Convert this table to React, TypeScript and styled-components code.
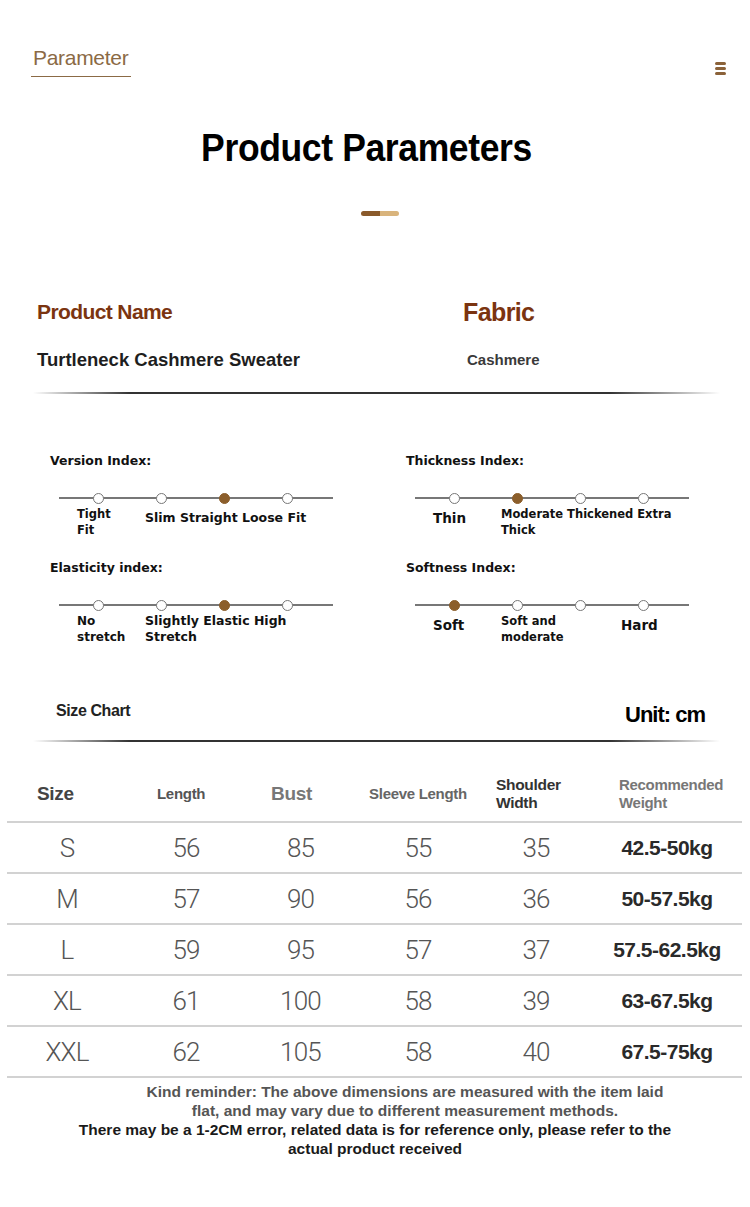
import * as React from 'react';
import styled, { createGlobalStyle } from 'styled-components';

const NARROW = '"Liberation Sans", Arial, sans-serif';
const WIDE = '"DejaVu Sans", Verdana, sans-serif';
const LIGHT = 'Roboto, "Liberation Sans", sans-serif';
const BROWN = '#8b6a45';
const DOT = '#8b5e2b';

const GlobalStyle = createGlobalStyle`
  html, body {
    margin: 0;
    padding: 0;
    background: #fff;
  }
  body {
    font-family: ${NARROW};
    color: #222;
  }
`;

const Page = styled.div`
  width: 750px;
  min-height: 1207px;
  background: #fff;
  overflow: hidden;
`;

const TopBar = styled.div`
  display: flex;
  justify-content: space-between;
  align-items: flex-start;
  padding: 46px 24px 0 31px;
`;

const Tab = styled.div`
  font-family: ${NARROW};
  font-size: 21px;
  line-height: 24px;
  letter-spacing: -0.3px;
  color: ${BROWN};
  padding: 0 3px 6px 2px;
  border-bottom: 1px solid ${BROWN};
`;

const MenuIcon = styled.div`
  display: flex;
  flex-direction: column;
  gap: 2px;
  margin-top: 16px;

  span {
    display: block;
    width: 11px;
    height: 3px;
    border-radius: 2px;
    background: #8b6239;
  }
`;

const Title = styled.h1`
  margin: 48px 17px 0 0;
  text-align: center;
  font-family: ${NARROW};
  font-weight: bold;
  font-size: 39px;
  line-height: 46px;
  letter-spacing: -0.4px;
  color: #000;
  transform: scaleX(0.91);
`;

const Accent = styled.div`
  display: flex;
  justify-content: center;
  margin-top: 40px;
  padding-left: 9px;

  span {
    width: 19px;
    height: 5px;
    background: #8a5a2b;
    border-radius: 3px 0 0 3px;
  }
  span + span {
    background: #d9b47c;
    border-radius: 0 3px 3px 0;
  }
`;

const InfoGrid = styled.div`
  display: grid;
  grid-template-columns: 426px 1fr;
  padding: 82px 0 0 37px;
`;

const InfoLabel = styled.div<{ $size: number }>`
  font-family: ${NARROW};
  font-weight: bold;
  font-size: ${({ $size }) => $size}px;
  line-height: 28px;
  letter-spacing: -0.6px;
  color: #7b3410;
`;

const InfoValue = styled.div<{ $size: number; $indent?: number }>`
  margin-top: 22px;
  padding-left: ${({ $indent }) => $indent ?? 0}px;
  font-family: ${NARROW};
  font-weight: bold;
  font-size: ${({ $size }) => $size}px;
  line-height: 24px;
  color: ${({ $size }) => ($size > 16 ? '#1e1e1e' : '#3a3a3a')};
`;

const Divider = styled.div<{ $top: number }>`
  margin: ${({ $top }) => $top}px 30px 0 33px;
  height: 2px;
  background: linear-gradient(
    to right,
    rgba(40, 40, 40, 0) 0%,
    #333 14%,
    #333 84%,
    rgba(40, 40, 40, 0) 100%
  );
`;

const IndexGrid = styled.div`
  display: grid;
  grid-template-columns: 356px 1fr;
  row-gap: 21px;
  padding: 58px 0 0 50px;
`;

const IndexBlock = styled.div`
  display: flex;
  flex-direction: column;
`;

const IndexTitle = styled.div`
  font-family: ${WIDE};
  font-weight: bold;
  font-size: 12.5px;
  line-height: 18px;
  color: #111;
`;

const Track = styled.div`
  position: relative;
  display: grid;
  grid-template-columns: repeat(4, 63px);
  width: 274px;
  margin: 22px 0 0 9px;
  padding-left: 8px;
  box-sizing: border-box;
  height: 12px;
  align-items: center;

  &::before {
    content: '';
    position: absolute;
    left: 0;
    right: 0;
    top: 5px;
    height: 1.5px;
    background: #777;
  }
`;

const Dot = styled.span<{ $on: boolean }>`
  position: relative;
  justify-self: center;
  width: 11px;
  height: 11px;
  box-sizing: border-box;
  border-radius: 50%;
  border: 1px solid ${({ $on }) => ($on ? DOT : '#777')};
  background: ${({ $on }) => ($on ? DOT : '#fff')};
`;

const Labels = styled.div`
  display: grid;
  grid-template-columns: 68px 120px auto;
  padding-left: 27px;
  margin-top: 2px;
  align-items: start;
`;

const Label = styled.div<{ $size: number; $drop: boolean }>`
  padding-top: ${({ $drop }) => ($drop ? 4 : 0)}px;
  font-family: ${WIDE};
  font-weight: bold;
  font-size: ${({ $size }) => $size}px;
  line-height: 16px;
  color: #111;
  white-space: pre;
`;

const ChartHead = styled.div`
  display: flex;
  justify-content: space-between;
  align-items: center;
  padding: 57px 45px 0 56px;
`;

const ChartTitle = styled.div`
  font-family: ${NARROW};
  font-weight: bold;
  font-size: 16px;
  letter-spacing: -0.4px;
  color: #222;
  margin-top: -8px;
`;

const Unit = styled.div`
  font-family: ${NARROW};
  font-weight: bold;
  font-size: 22px;
  letter-spacing: -1px;
  color: #000;
`;

const Table = styled.div`
  margin: 28px 8px 0 7px;
`;

const Row = styled.div<{ $head?: boolean }>`
  display: grid;
  grid-template-columns: 120px 118px 111px 124px 112px 1fr;
  align-items: center;
  height: ${({ $head }) => ($head ? 47 : 49)}px;
  padding-bottom: ${({ $head }) => ($head ? 4 : 0)}px;
  border-bottom: 2px solid #d2d2d2;
`;

const HeadCell = styled.div<{ $pad?: number; $size: number; $color: string }>`
  text-align: ${({ $pad }) => ($pad === undefined ? 'center' : 'left')};
  padding-left: ${({ $pad }) => $pad ?? 0}px;
  font-family: ${NARROW};
  font-weight: bold;
  font-size: ${({ $size }) => $size}px;
  line-height: 18px;
  letter-spacing: -0.3px;
  color: ${({ $color }) => $color};
  white-space: pre;
`;

const Cell = styled.div`
  text-align: center;
  font-family: ${LIGHT};
  font-weight: 300;
  font-size: 26px;
  color: #555;
  letter-spacing: -0.8px;
`;

const Weight = styled.div`
  text-align: center;
  font-family: ${NARROW};
  font-weight: bold;
  font-size: 21px;
  color: #2a2a2a;
  letter-spacing: -0.5px;
`;

const Notes = styled.div`
  margin-top: 4px;
  text-align: center;
  font-family: ${NARROW};
  font-weight: bold;
  font-size: 15.5px;
  line-height: 19px;
`;

const Note = styled.p<{ $muted?: boolean; $shift?: number }>`
  margin: 0;
  padding-left: ${({ $shift }) => $shift ?? 0}px;
  color: ${({ $muted }) => ($muted ? '#555' : '#1a1a1a')};
  white-space: pre-line;
`;

type Index = {
  title: string;
  active: number;
  labels: { text: string; size: number }[];
};

const indexes: Index[] = [
  {
    title: 'Version Index:',
    active: 2,
    labels: [
      { text: 'Tight\nFit', size: 11.5 },
      { text: 'Slim Straight Loose Fit', size: 12.5 },
    ],
  },
  {
    title: 'Thickness Index:',
    active: 1,
    labels: [
      { text: 'Thin', size: 13.5 },
      { text: 'Moderate Thickened Extra\nThick', size: 11.5 },
    ],
  },
  {
    title: 'Elasticity index:',
    active: 2,
    labels: [
      { text: 'No\nstretch', size: 12 },
      { text: 'Slightly Elastic High\nStretch', size: 12.5 },
    ],
  },
  {
    title: 'Softness Index:',
    active: 0,
    labels: [
      { text: 'Soft', size: 13.5 },
      { text: 'Soft and\nmoderate', size: 11.5 },
      { text: 'Hard', size: 13.5 },
    ],
  },
];

const sizes = [
  ['S', '56', '85', '55', '35', '42.5-50kg'],
  ['M', '57', '90', '56', '36', '50-57.5kg'],
  ['L', '59', '95', '57', '37', '57.5-62.5kg'],
  ['XL', '61', '100', '58', '39', '63-67.5kg'],
  ['XXL', '62', '105', '58', '40', '67.5-75kg'],
];

function IndexScale({ title, active, labels }: Index) {
  const twoLine = labels.some((l) => l.text.includes('\n'));
  return (
    <IndexBlock>
      <IndexTitle>{title}</IndexTitle>
      <Track>
        {[0, 1, 2, 3].map((i) => (
          <Dot key={i} $on={i === active} />
        ))}
      </Track>
      <Labels>
        {labels.map((l) => (
          <Label
            key={l.text}
            $size={l.size}
            $drop={twoLine && !l.text.includes('\n')}
          >
            {l.text}
          </Label>
        ))}
      </Labels>
    </IndexBlock>
  );
}

export default function App() {
  return (
    <Page>
      <GlobalStyle />
      <TopBar>
        <Tab>Parameter</Tab>
        <MenuIcon>
          <span />
          <span />
          <span />
        </MenuIcon>
      </TopBar>

      <Title>Product Parameters</Title>
      <Accent>
        <span />
        <span />
      </Accent>

      <InfoGrid>
        <div>
          <InfoLabel $size={21}>Product Name</InfoLabel>
          <InfoValue $size={18.5}>Turtleneck Cashmere Sweater</InfoValue>
        </div>
        <div>
          <InfoLabel $size={25}>Fabric</InfoLabel>
          <InfoValue $size={15} $indent={4}>
            Cashmere
          </InfoValue>
        </div>
      </InfoGrid>
      <Divider $top={20} />

      <IndexGrid>
        {indexes.map((idx) => (
          <IndexScale key={idx.title} {...idx} />
        ))}
      </IndexGrid>

      <ChartHead>
        <ChartTitle>Size Chart</ChartTitle>
        <Unit>Unit: cm</Unit>
      </ChartHead>
      <Divider $top={12} />

      <Table>
        <Row $head>
          <HeadCell $pad={30} $size={19} $color="#444">
            Size
          </HeadCell>
          <HeadCell $pad={30} $size={15} $color="#555">
            Length
          </HeadCell>
          <HeadCell $pad={26} $size={19} $color="#777">
            Bust
          </HeadCell>
          <HeadCell $size={15} $color="#666">
            Sleeve Length
          </HeadCell>
          <HeadCell $pad={16} $size={15.5} $color="#333">
            {'Shoulder\nWidth'}
          </HeadCell>
          <HeadCell $pad={27} $size={15} $color="#777">
            {'Recommended\nWeight'}
          </HeadCell>
        </Row>
        {sizes.map((r) => (
          <Row key={r[0]}>
            {r.slice(0, 5).map((v, i) => (
              <Cell key={i}>{v}</Cell>
            ))}
            <Weight>{r[5]}</Weight>
          </Row>
        ))}
      </Table>

      <Notes>
        <Note $muted $shift={60}>
          {'Kind reminder: The above dimensions are measured with the item laid\nflat, and may vary due to different measurement methods.'}
        </Note>
        <Note>
          {'There may be a 1-2CM error, related data is for reference only, please refer to the\nactual product received'}
        </Note>
      </Notes>
    </Page>
  );
}
